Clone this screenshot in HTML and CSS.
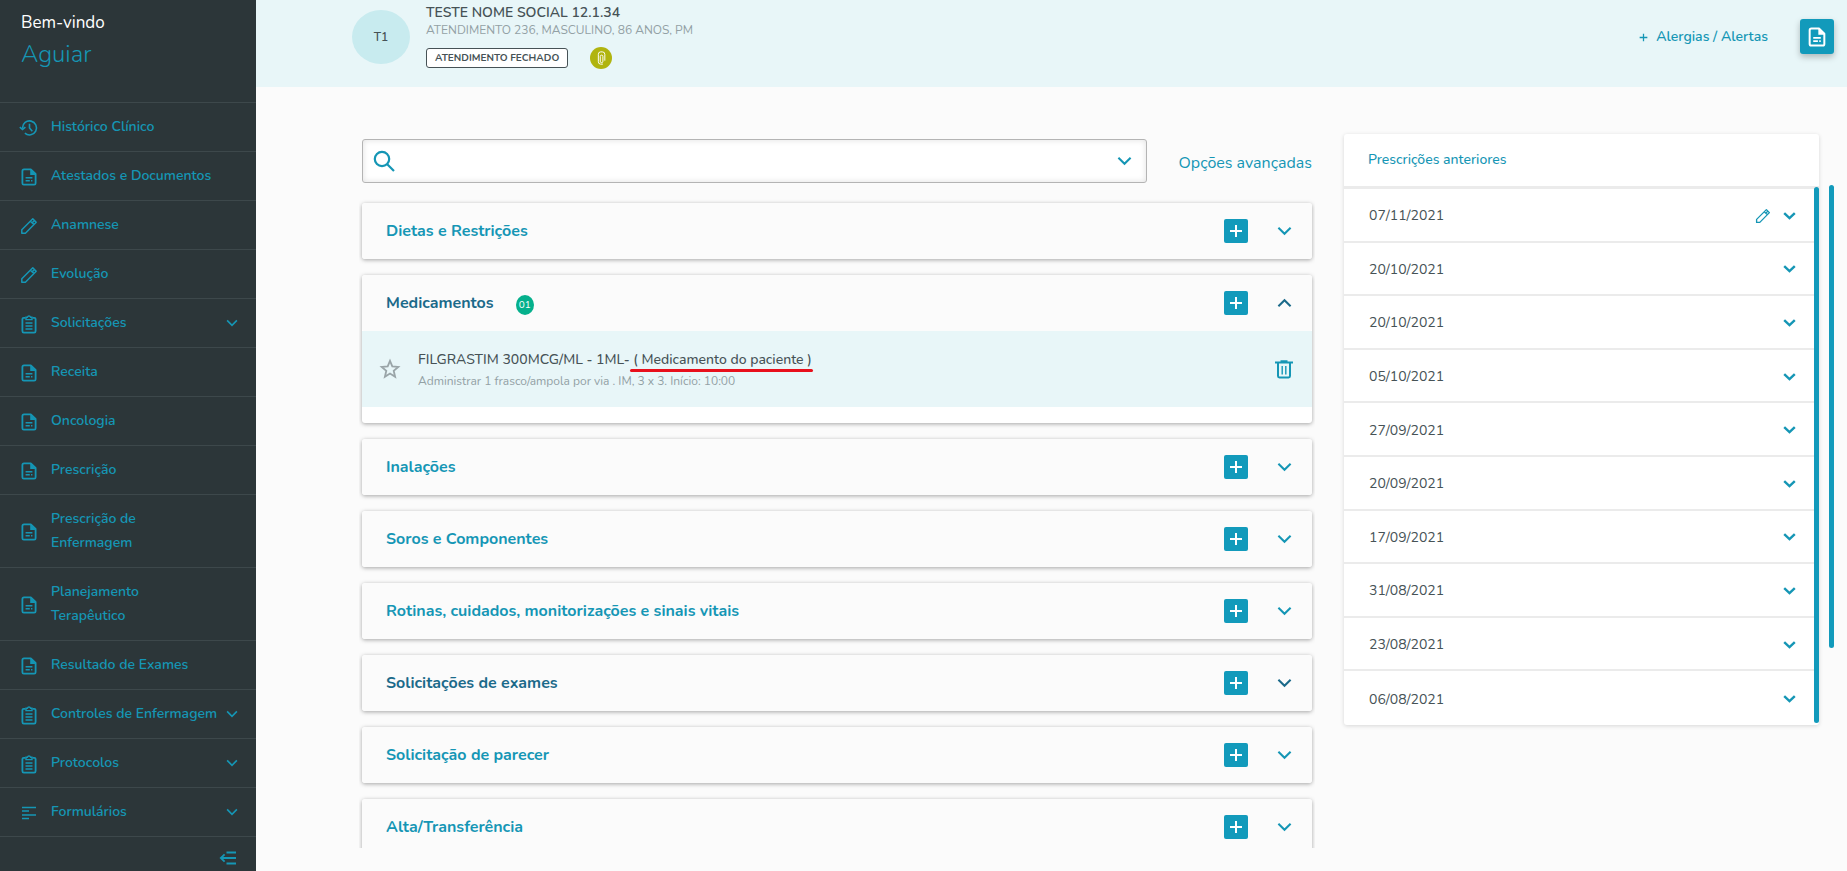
FILE: index.html
```html
<!DOCTYPE html>
<html lang="pt-BR">
<head>
  <meta charset="UTF-8" />
  <meta name="viewport" content="width=device-width, initial-scale=1.0"/>
  <title>Prescrição</title>
  <link rel="stylesheet" href="styles.css">
</head>
<body>
  <!-- icon sprite -->
  <svg class="sprite" aria-hidden="true">
    <symbol id="i-history" viewBox="0 0 20 18"><g fill="none" stroke="currentColor" stroke-width="1.6"><path d="M3.5 9.5V9a7 7 0 1 1 2.4 5.2"/><path d="M.8 8.2l2.7 2.3 2.9-2.3M10.5 4.8V9l2.8 3.2"/></g></symbol>
    <symbol id="i-doc" viewBox="0 0 16 18"><path fill="none" stroke="currentColor" stroke-width="1.8" stroke-linejoin="round" d="M3 1.4h6.8L14.6 6v9.2q0 1.4-1.4 1.4H2.8q-1.4 0-1.4-1.4V3q0-1.6 1.6-1.6z"/><path fill="currentColor" d="M9.2 1.4L14.8 7H9.2zM4.6 9h6.8v1.5H4.6zM4.6 12h4.2v1.5H4.6zM10 12h1.4v1.5H10z"/></symbol>
    <symbol id="i-pencil" viewBox="0 0 18 18"><path fill="none" stroke="currentColor" stroke-width="1.5" stroke-linejoin="round" d="M1.8 12.8L12.8 1.8l3.4 3.4L5.4 16.2H1.8zM10.4 4.2l3.4 3.2M12.4 5.6l1.6-1.6"/></symbol>
    <symbol id="i-clip" viewBox="0 0 16 20"><path fill="none" stroke="currentColor" stroke-width="1.8" d="M4.5 3.8H2.7Q1.4 3.8 1.4 5v12q0 1.6 1.4 1.6h10.4q1.4 0 1.4-1.6V5q0-1.2-1.3-1.2h-1.8"/><path fill="none" stroke="currentColor" stroke-width="1.4" d="M5 5.6V3.2h1.4a1.7 1.7 0 0 1 3.2 0H11v2.4zM4.5 9h7M4.5 12h7M4.5 15h7"/></symbol>
    <symbol id="i-lines" viewBox="0 0 16 14"><path stroke="currentColor" stroke-width="1.3" d="M1 1.5h14M1 5h7M1 9h14M1 12.5h7"/></symbol>
    <symbol id="i-collapse" viewBox="0 0 18 14"><path fill="none" stroke="currentColor" stroke-width="1.8" d="M7.5 1.5H17M2 7h15M7.5 12.5H17M5.6 3.4L1.8 7l3.8 3.6"/></symbol>
    <symbol id="i-down" viewBox="0 0 16 10"><path fill="none" stroke="currentColor" stroke-width="2.2" d="M1.5 1.5L8 8l6.5-6.5"/></symbol>
    <symbol id="i-down-bold" viewBox="0 0 13 8"><path fill="none" stroke="currentColor" stroke-width="2.4" d="M1.2 1.2l5.3 5 5.3-5"/></symbol>
    <symbol id="i-up" viewBox="0 0 16 10"><path fill="none" stroke="currentColor" stroke-width="2.2" d="M1.5 8.5L8 2l6.5 6.5"/></symbol>
    <symbol id="i-plus" viewBox="0 0 14 14"><path stroke="currentColor" stroke-width="2" d="M7 1v12M1 7h12"/></symbol>
    <symbol id="i-search" viewBox="0 0 22 22"><g fill="none" stroke="currentColor" stroke-width="2.2"><circle cx="9" cy="9" r="7.2"/><path d="M14 14l7 7"/></g></symbol>
    <symbol id="i-star" viewBox="0 0 22 22"><path fill="none" stroke="currentColor" stroke-width="1.8" d="M11 2.8l2.3 5.6 6 .5-4.6 3.9 1.4 5.9-5.1-3.2-5.1 3.2 1.4-5.9-4.6-3.9 6-.5z"/></symbol>
    <symbol id="i-trash" viewBox="0 0 18 20"><path fill="none" stroke="currentColor" stroke-width="2" d="M0 3.5h18M5.5 2.2h7M3 4v13q0 1.4 1.4 1.4h9.2q1.4 0 1.4-1.4V4"/><path stroke="currentColor" stroke-width="1.4" d="M7.2 7v8.4M10.8 7v8.4"/></symbol>
    <symbol id="i-attach" viewBox="0 0 10 16"><path fill="none" stroke="currentColor" stroke-width="1.1" d="M3.6 12V6.2a1.5 1.5 0 0 1 3 0v5.6a1.5 1.5 0 0 1-3 0M8.8 11V3.8Q8.8 1 6 1H4Q1.4 1 1.4 3.8v8.4Q1.4 15 4 15h2.6"/></symbol>
  </svg>

  <nav class="sidebar">
    <div class="welcome">
      <span>Bem-vindo</span>
      <strong>Aguiar</strong>
    </div>
    <ul class="menu">
      <li><a href="#"><svg class="ico"><use href="#i-history"/></svg><span>Histórico Clínico</span></a></li>
      <li><a href="#"><svg class="ico"><use href="#i-doc"/></svg><span>Atestados e Documentos</span></a></li>
      <li><a href="#"><svg class="ico"><use href="#i-pencil"/></svg><span>Anamnese</span></a></li>
      <li><a href="#"><svg class="ico"><use href="#i-pencil"/></svg><span>Evolução</span></a></li>
      <li><a href="#"><svg class="ico clip"><use href="#i-clip"/></svg><span>Solicitações</span><svg class="arrow"><use href="#i-down"/></svg></a></li>
      <li><a href="#"><svg class="ico"><use href="#i-doc"/></svg><span>Receita</span></a></li>
      <li><a href="#"><svg class="ico"><use href="#i-doc"/></svg><span>Oncologia</span></a></li>
      <li><a href="#"><svg class="ico"><use href="#i-doc"/></svg><span>Prescrição</span></a></li>
      <li><a href="#"><svg class="ico"><use href="#i-doc"/></svg><span>Prescrição de<br>Enfermagem</span></a></li>
      <li><a href="#"><svg class="ico"><use href="#i-doc"/></svg><span>Planejamento<br>Terapêutico</span></a></li>
      <li><a href="#"><svg class="ico"><use href="#i-doc"/></svg><span>Resultado de Exames</span></a></li>
      <li><a href="#"><svg class="ico clip"><use href="#i-clip"/></svg><span>Controles de Enfermagem</span><svg class="arrow"><use href="#i-down"/></svg></a></li>
      <li><a href="#"><svg class="ico clip"><use href="#i-clip"/></svg><span>Protocolos</span><svg class="arrow"><use href="#i-down"/></svg></a></li>
      <li><a href="#"><svg class="ico lines"><use href="#i-lines"/></svg><span>Formulários</span><svg class="arrow"><use href="#i-down"/></svg></a></li>
    </ul>
    <button class="collapse" aria-label="Recolher menu"><svg><use href="#i-collapse"/></svg></button>
  </nav>

  <div class="page">
    <header class="patient">
      <div class="avatar">T1</div>
      <div class="patient-info">
        <h1>TESTE NOME SOCIAL 12.1.34</h1>
        <p>ATENDIMENTO 236, MASCULINO, 86 ANOS, PM</p>
        <div class="tags">
          <span class="status">ATENDIMENTO FECHADO</span>
          <span class="attach"><svg><use href="#i-attach"/></svg></span>
        </div>
      </div>
      <a class="alerts" href="#"><svg><use href="#i-plus"/></svg>Alergias / Alertas</a>
      <button class="doc-btn" aria-label="Documentos"><svg><use href="#i-doc"/></svg></button>
    </header>

    <main>
      <section class="content">
        <div class="search-row">
          <label class="search">
            <svg class="lens"><use href="#i-search"/></svg>
            <input type="text" aria-label="Buscar">
            <svg class="chev"><use href="#i-down"/></svg>
          </label>
          <a href="#">Opções avançadas</a>
        </div>

        <div class="cards">
          <article class="card">
            <div class="card-head"><h2>Dietas e Restrições</h2><button class="add" aria-label="Adicionar"><svg><use href="#i-plus"/></svg></button><button class="toggle" aria-label="Expandir"><svg><use href="#i-down"/></svg></button></div>
          </article>
          <article class="card open">
            <div class="card-head active"><h2>Medicamentos</h2><span class="count">01</span><button class="add" aria-label="Adicionar"><svg><use href="#i-plus"/></svg></button><button class="toggle" aria-label="Recolher"><svg><use href="#i-up"/></svg></button></div>
            <div class="item">
              <button class="star" aria-label="Favoritar"><svg><use href="#i-star"/></svg></button>
              <div class="item-text">
                <h3>FILGRASTIM 300MCG/ML - 1ML- <span class="marked">( Medicamento do paciente )</span></h3>
                <p>Administrar 1 frasco/ampola por via . IM, 3 x 3. Início: 10:00</p>
              </div>
              <button class="trash" aria-label="Excluir"><svg><use href="#i-trash"/></svg></button>
            </div>
          </article>
          <article class="card">
            <div class="card-head"><h2>Inalações</h2><button class="add" aria-label="Adicionar"><svg><use href="#i-plus"/></svg></button><button class="toggle" aria-label="Expandir"><svg><use href="#i-down"/></svg></button></div>
          </article>
          <article class="card">
            <div class="card-head"><h2>Soros e Componentes</h2><button class="add" aria-label="Adicionar"><svg><use href="#i-plus"/></svg></button><button class="toggle" aria-label="Expandir"><svg><use href="#i-down"/></svg></button></div>
          </article>
          <article class="card">
            <div class="card-head"><h2>Rotinas, cuidados, monitorizações e sinais vitais</h2><button class="add" aria-label="Adicionar"><svg><use href="#i-plus"/></svg></button><button class="toggle" aria-label="Expandir"><svg><use href="#i-down"/></svg></button></div>
          </article>
          <article class="card">
            <div class="card-head active"><h2>Solicitações de exames</h2><button class="add" aria-label="Adicionar"><svg><use href="#i-plus"/></svg></button><button class="toggle" aria-label="Expandir"><svg><use href="#i-down"/></svg></button></div>
          </article>
          <article class="card">
            <div class="card-head"><h2>Solicitação de parecer</h2><button class="add" aria-label="Adicionar"><svg><use href="#i-plus"/></svg></button><button class="toggle" aria-label="Expandir"><svg><use href="#i-down"/></svg></button></div>
          </article>
          <article class="card">
            <div class="card-head"><h2>Alta/Transferência</h2><button class="add" aria-label="Adicionar"><svg><use href="#i-plus"/></svg></button><button class="toggle" aria-label="Expandir"><svg><use href="#i-down"/></svg></button></div>
          </article>
        </div>
      </section>

      <aside class="previous">
        <h2>Prescrições anteriores</h2>
        <div class="dates">
          <ul>
            <li><span>07/11/2021</span><svg class="edit"><use href="#i-pencil"/></svg><svg class="open-date"><use href="#i-down-bold"/></svg></li>
            <li><span>20/10/2021</span><svg class="open-date"><use href="#i-down-bold"/></svg></li>
            <li><span>20/10/2021</span><svg class="open-date"><use href="#i-down-bold"/></svg></li>
            <li><span>05/10/2021</span><svg class="open-date"><use href="#i-down-bold"/></svg></li>
            <li><span>27/09/2021</span><svg class="open-date"><use href="#i-down-bold"/></svg></li>
            <li><span>20/09/2021</span><svg class="open-date"><use href="#i-down-bold"/></svg></li>
            <li><span>17/09/2021</span><svg class="open-date"><use href="#i-down-bold"/></svg></li>
            <li><span>31/08/2021</span><svg class="open-date"><use href="#i-down-bold"/></svg></li>
            <li><span>23/08/2021</span><svg class="open-date"><use href="#i-down-bold"/></svg></li>
            <li><span>06/08/2021</span><svg class="open-date"><use href="#i-down-bold"/></svg></li>
          </ul>
          <div class="thumb"></div>
        </div>
      </aside>
      <div class="page-thumb"></div>
    </main>
  </div>
</body>
</html>
```
FILE: styles.css
```css
* {
  box-sizing: border-box;
}
body {
  margin: 0;
  height: 100vh;
  display: flex;
  overflow: hidden;
  font-family: Nunito, Lato, "Noto Sans", sans-serif;
  font-size: 14px;
  background: #fbfbfb;
  color: #465256;
}
h1, h2, h3, p, ul {
  margin: 0;
  padding: 0;
}
ul {
  list-style: none;
}
a {
  color: #1596b5;
  text-decoration: none;
}
button {
  padding: 0;
  border: 0;
  background: none;
  color: #1596b5;
  cursor: pointer;
  display: flex;
  align-items: center;
  justify-content: center;
}
svg {
  display: block;
  flex-shrink: 0;
}
.sprite {
  display: none;
}

/* sidebar */
.sidebar {
  width: 256px;
  flex-shrink: 0;
  background: #2c3639;
}
.welcome {
  height: 102px;
  padding: 11px 21px;
}
.welcome span {
  display: block;
  color: #fff;
  font-size: 17px;
  line-height: 24px;
}
.welcome strong {
  display: block;
  color: #1596b5;
  font-size: 24px;
  font-weight: 300;
  line-height: 38px;
}
.menu li {
  border-top: 1px solid #3d484b;
}
.menu li:last-child {
  border-bottom: 1px solid #3d484b;
}
.menu a {
  display: flex;
  align-items: center;
  padding: 12px 18px 12px 19px;
  line-height: 24px;
  font-weight: 600;
}
.menu span {
  flex: 1;
  white-space: nowrap;
}
.menu .ico {
  width: 20px;
  height: 18px;
  margin: 2px 12px 0 0;
}
.menu .clip {
  height: 20px;
}
.menu .lines {
  height: 14px;
}
.menu .arrow {
  width: 12px;
  height: 8px;
}
.collapse {
  margin: 14px 19px 0 auto;
}
.collapse svg {
  width: 18px;
  height: 14px;
}

/* patient bar */
.page {
  flex: 1;
  min-width: 0;
  display: flex;
  flex-direction: column;
}
.patient {
  height: 87px;
  flex-shrink: 0;
  display: flex;
  align-items: flex-start;
  padding: 0 13px 0 96px;
  background: #e8f6f8;
}
.avatar {
  width: 58px;
  height: 54px;
  margin: 10px 16px 0 0;
  border-radius: 50%;
  background: #c8ebef;
  font-size: 12px;
  font-weight: 600;
  line-height: 54px;
  text-align: center;
}
.patient-info {
  flex: 1;
  padding-top: 3px;
}
.patient-info h1 {
  font-size: 14px;
  font-weight: 600;
  line-height: 20px;
}
.patient-info p {
  font-size: 12px;
  line-height: 14px;
  color: #93a1a5;
}
.tags {
  display: flex;
  align-items: center;
  gap: 22px;
  margin-top: 10px;
}
.status {
  padding: 0 8px;
  border: 1px solid #465256;
  border-radius: 3px;
  background: #fff;
  font-size: 10px;
  font-weight: 700;
  line-height: 18px;
}
.attach {
  width: 22px;
  height: 22px;
  border-radius: 50%;
  background: #b0b40f;
  color: #fff;
  display: flex;
  align-items: center;
  justify-content: center;
}
.attach svg {
  width: 9px;
  height: 14px;
}
.alerts {
  display: flex;
  align-items: center;
  gap: 8px;
  margin: 25px 32px 0 0;
  font-weight: 600;
  line-height: 24px;
}
.alerts svg {
  width: 9px;
  height: 9px;
}
.doc-btn {
  width: 34px;
  height: 35px;
  margin-top: 19px;
  border-radius: 3px;
  background: #129abb;
  color: #fff;
  box-shadow: 0 3px 6px rgba(0,0,0,0.25);
}
.doc-btn svg {
  width: 18px;
  height: 20px;
}

/* main area */
main {
  flex: 1;
  min-height: 0;
  display: flex;
  align-items: flex-start;
  padding: 47px 13px 23px 106px;
}
.content {
  flex: 2;
  align-self: stretch;
  display: flex;
  flex-direction: column;
  padding-top: 5px;
  min-height: 0;
}
.search-row {
  display: flex;
  align-items: center;
  gap: 32px;
  padding-bottom: 12px;
}
.search {
  flex: 1;
  height: 44px;
  display: flex;
  align-items: center;
  padding: 0 14px 0 10px;
  border: 1px solid #b4b4b4;
  border-radius: 3px;
  background: #fff;
  color: #1596b5;
  box-shadow: inset 0 0 6px rgba(0,0,0,0.12);
}
.search input {
  flex: 1;
  height: 36px;
  border: 0;
  outline: 0;
  background: none;
  font: inherit;
}
.lens {
  width: 22px;
  height: 22px;
}
.chev {
  width: 15px;
  height: 10px;
}
.search-row a {
  padding-top: 4px;
  font-size: 16px;
  line-height: 24px;
}
.cards {
  flex: 1;
  min-height: 0;
  overflow: hidden;
  margin: 0 -3px;
  padding: 8px 3px 0;
}
.card {
  margin-bottom: 16px;
  border-radius: 3px;
  background: #fbfbfb;
  box-shadow: 0 1px 4px rgba(0,0,0,0.35);
}
.card.open {
  padding-bottom: 16px;
  background: #fff;
}
.card-head {
  display: flex;
  align-items: center;
  height: 56px;
  padding: 0 16px 0 24px;
  border-radius: 3px;
  background: #fbfbfb;
  color: #1596b5;
}
.card-head h2 {
  font-size: 16px;
  font-weight: 700;
  line-height: 24px;
}
.card-head.active, .card-head.active .toggle {
  color: #1b6a8a;
}
.count {
  width: 18px;
  height: 20px;
  margin: 4px 0 0 22px;
  border-radius: 50%;
  background: #05b08c;
  color: #fff;
  font-size: 10px;
  line-height: 20px;
  text-align: center;
}
.add {
  width: 24px;
  height: 24px;
  margin-left: auto;
  border-radius: 2px;
  background: #129abb;
  color: #fff;
}
.add svg {
  width: 14px;
  height: 14px;
}
.toggle {
  width: 24px;
  height: 24px;
  margin-left: 24px;
}
.toggle svg {
  width: 15px;
  height: 10px;
}
.item {
  display: flex;
  align-items: center;
  height: 76px;
  padding: 0 19px 0 17px;
  background: #e8f6f8;
}
.star {
  color: #9aa5a8;
}
.star svg {
  width: 22px;
  height: 22px;
}
.item-text {
  flex: 1;
  padding: 2px 0 0 17px;
}
.item h3 {
  font-size: 14px;
  font-weight: 500;
  line-height: 22px;
}
.item p {
  font-size: 12px;
  line-height: 20px;
  color: #93a1a5;
}
.marked {
  position: relative;
}
.marked::after {
  content: "";
  position: absolute;
  left: -3px;
  right: -1px;
  bottom: -3px;
  height: 3px;
  border-radius: 2px;
  background: #e8101c;
}
.trash svg {
  width: 18px;
  height: 20px;
}

/* previous prescriptions */
.previous {
  flex: 1;
  margin-left: 32px;
  border-radius: 3px;
  background: #fff;
  box-shadow: 0 1px 4px rgba(0,0,0,0.15);
}
.previous h2 {
  padding: 14px 24px;
  border-bottom: 3px solid #ebebeb;
  color: #1596b5;
  font-size: 14px;
  font-weight: 500;
  line-height: 24px;
}
.dates {
  display: flex;
  height: 536px;
}
.dates ul {
  flex: 1;
  display: grid;
  grid-auto-rows: 1fr;
}
.dates li {
  display: flex;
  align-items: center;
  padding: 2px 18px 0 25px;
  border-bottom: 2px solid #ebebeb;
}
.dates li:last-child {
  border-bottom: 0;
}
.dates span {
  flex: 1;
}
.dates svg {
  color: #1596b5;
}
.edit {
  width: 16px;
  height: 16px;
  margin-right: 12px;
}
.open-date {
  width: 13px;
  height: 8px;
}
.thumb {
  width: 5px;
  margin: -2px 0 2px;
  border-radius: 3px;
  background: #129abb;
}
.page-thumb {
  width: 5px;
  height: 463px;
  margin: 51px 0 0 10px;
  border-radius: 3px;
  background: #129abb;
}
```
